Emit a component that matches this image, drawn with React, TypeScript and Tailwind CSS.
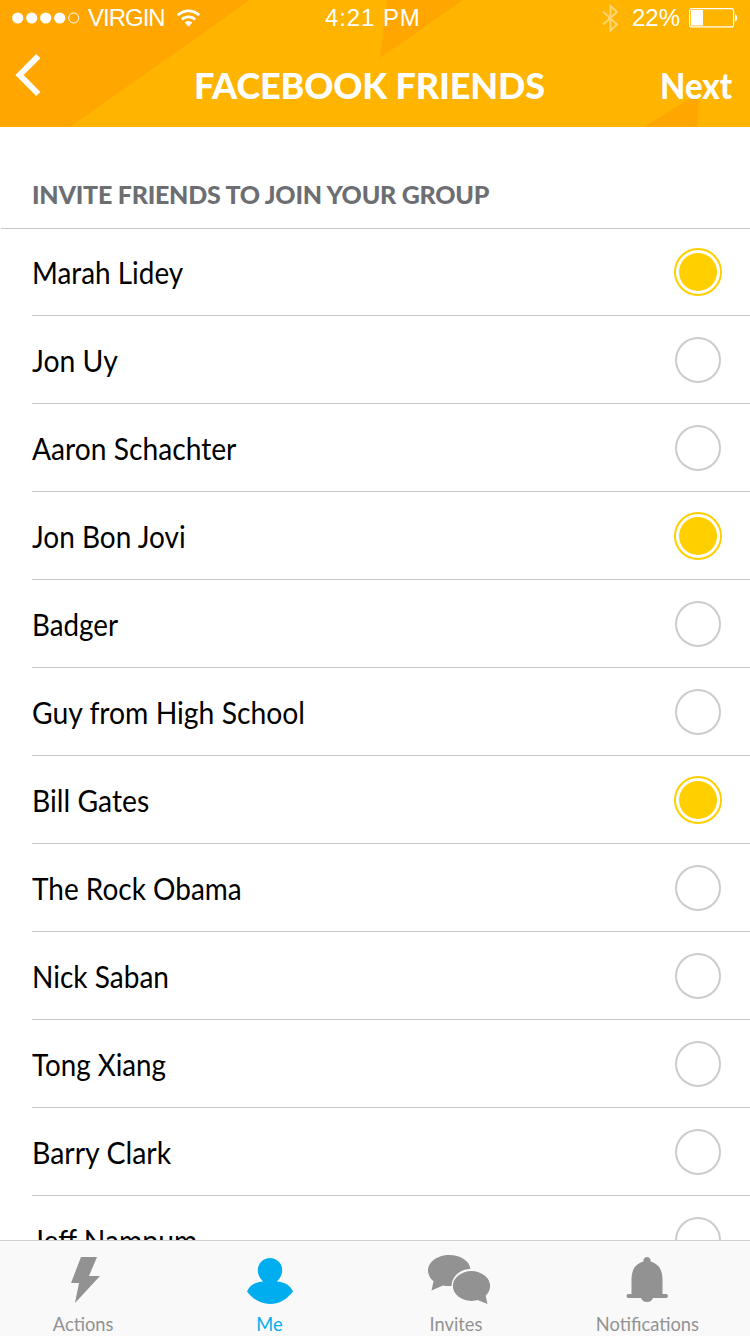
import type { ReactNode } from "react";

type Friend = { name: string; selected?: boolean; fit: string };

const friends: Friend[] = [
  { name: "Marah Lidey", selected: true, fit: "scale-x-[0.929]" },
  { name: "Jon Uy", fit: "scale-x-[0.945]" },
  { name: "Aaron Schachter", fit: "scale-x-[0.94]" },
  { name: "Jon Bon Jovi", selected: true, fit: "scale-x-[0.933]" },
  { name: "Badger", fit: "scale-x-[0.925]" },
  { name: "Guy from High School", fit: "scale-x-[0.944]" },
  { name: "Bill Gates", selected: true, fit: "scale-x-[0.944]" },
  { name: "The Rock Obama", fit: "scale-x-[0.933]" },
  { name: "Nick Saban", fit: "scale-x-[0.935]" },
  { name: "Tong Xiang", fit: "scale-x-[0.924]" },
  { name: "Barry Clark", fit: "scale-x-[0.95]" },
  { name: "Jeff Nampum", fit: "scale-x-[0.943]" },
];

function StatusBar() {
  return (
    <div className="relative flex h-9 items-center justify-between pl-3 pr-3 font-['Liberation_Sans',sans-serif] text-[24px] leading-9">
      <div className="flex items-center">
        <svg width="68" height="12" viewBox="0 0 68 12" fill="#fff">
          <circle cx="5.7" cy="6" r="5.6" />
          <circle cx="19.7" cy="6" r="5.6" />
          <circle cx="33.7" cy="6" r="5.6" />
          <circle cx="47.7" cy="6" r="5.6" />
          <circle cx="61.7" cy="6" r="5" fill="none" stroke="#fff" strokeWidth="1" />
        </svg>
        <span className="ml-2 w-[78px] tracking-[-1px]">VIRGIN</span>
        <svg className="ml-[10px]" width="25" height="20" viewBox="0 0 25 20" fill="none" stroke="#fff" strokeWidth="2.8">
          <path d="M1.8 7.3a15.2 15.2 0 0 1 21.4 0" />
          <path d="M5.8 11.6a9.6 9.6 0 0 1 13.4 0" />
          <path d="M8.6 14.6a5.6 5.6 0 0 1 7.8 0L12.5 18.8z" fill="#fff" stroke="none" />
        </svg>
      </div>
      <span className="absolute left-[325px] tracking-[0.9px]">4:21 PM</span>
      <div className="flex items-center">
        <svg width="17" height="28" viewBox="0 0 17 28" fill="none" stroke="#fff" strokeOpacity="0.45" strokeWidth="2">
          <path d="M1 7.5 15 20.5 8.5 26.5V2l6.5 6L1 20.5" />
        </svg>
        <span className="ml-[13px] w-[49px]">22%</span>
        <svg className="ml-[8px]" width="49" height="20" viewBox="0 0 49 20">
          <rect x="0.6" y="0.6" width="44" height="18.3" rx="2.2" fill="none" stroke="#fff" strokeWidth="1.2" />
          <rect x="2" y="2" width="12" height="15.5" fill="#fff" />
          <path d="M46 6.2c3 .8 3 6.6 0 7.4z" fill="#fff" />
        </svg>
      </div>
    </div>
  );
}

function Header() {
  return (
    <header className="relative h-[127px] shrink-0 overflow-hidden bg-[#ffb400] text-white">
      <svg className="absolute inset-0" width="750" height="127" viewBox="0 0 750 127" fill="#ffa600">
        <path d="M0 0h250L70 127H0z" />
        <path d="M387 0h76L380 58z" />
        <path d="M644 127 699 93l-2 34z" />
      </svg>
      <StatusBar />
      <div className="relative flex h-[91px] justify-between pl-[15px] pr-[18px]">
        <svg className="mt-[17px]" width="27" height="44" viewBox="0 0 27 44" fill="none" stroke="#fff" strokeWidth="6">
          <path d="M23.3 3.2 4.6 22l18.7 19" />
        </svg>
        <h1 className="absolute left-[194px] top-[25px] whitespace-nowrap text-[36px] font-black leading-[48px] tracking-[-0.15px]">
          FACEBOOK FRIENDS
        </h1>
        <button className="mt-[25px] h-12 origin-right scale-x-[0.91] whitespace-nowrap text-[36px] font-black leading-[48px]">
          Next
        </button>
      </div>
    </header>
  );
}

function Radio({ selected }: { selected?: boolean }) {
  return selected ? (
    <span className="flex size-12 items-center justify-center rounded-full border-2 border-[#ffcf00]">
      <span className="size-[38px] rounded-full bg-[#ffcf00]" />
    </span>
  ) : (
    <span className="mr-px size-[46px] rounded-full border-2 border-[#cccccc]" />
  );
}

function Tab({ label, active, width, children }: { label: string; active?: boolean; width: string; children: ReactNode }) {
  return (
    <button className={`flex flex-col items-center ${width} ${active ? "text-[#00aeef]" : "text-[#929292]"}`}>
      <svg className="mt-[11px]" width="80" height="56" viewBox="0 0 80 56" fill="currentColor">
        {children}
      </svg>
      <span className="mt-[3px] scale-x-[0.915] text-[20px] leading-6">{label}</span>
    </button>
  );
}

export default function App() {
  return (
    <div className="flex h-[1336px] w-[750px] flex-col overflow-hidden bg-white font-[Lato,sans-serif] text-black">
      <Header />
      <main className="min-h-0 flex-1 overflow-hidden">
        <div className="ml-px h-[102px] border-b border-[#c8c7cc] pl-[31px] pt-[51px]">
          <h2 className="whitespace-nowrap text-[25px] font-black leading-8 tracking-[-0.24px] text-[#6d6e72]">
            INVITE FRIENDS TO JOIN YOUR GROUP
          </h2>
        </div>
        <ul className="-mt-px">
          {friends.map((f) => (
            <li key={f.name} className="ml-8 flex h-[88px] items-center justify-between border-b border-[#c8c7cc] pr-7 pt-px">
              <span className={`origin-left whitespace-nowrap text-[30px] leading-9 ${f.fit}`}>{f.name}</span>
              <Radio selected={f.selected} />
            </li>
          ))}
        </ul>
      </main>
      <nav className="flex h-24 shrink-0 border-t border-[#d0d0d0] bg-[#f9f9f9]">
        <Tab label="Actions" width="w-[166px]">
          <path d="M38 5h16l-8 19h11L32 51l4-20h-8z" />
        </Tab>
        <Tab label="Me" active width="w-[206px]">
          <path d="M41 6a12.2 12.2 0 0 1 12.2 12.2c0 5-2.7 8.7-5.4 11.2C56 30 61 33 64 39.5 58 47.500 50 52 41 52s-17-4.500-23-12.500C21 33 26 30 34.200 29.400c-2.700-2.500-5.400-6.200-5.400-11.200A12.200 12.200 0 0 1 41 6z" />
        </Tab>
        <Tab label="Invites" width="w-[168px]">
          <path d="M33 3c11.500 0 20.500 6 21.500 13.700C44 17.500 36 24 35.500 34c-3 .3-6 0-8.500-.5L15.500 38.500l2-9.300C14 26.500 12 22.500 12 18.500 12 10 21.500 3 33 3z" />
          <ellipse cx="55.5" cy="34" rx="18.600" ry="15" />
          <path d="m61.500 48 10 4-2-9z" />
        </Tab>
        <Tab label="Notifications" width="w-[210px] pl-1">
          <path d="M40 5c2.200 0 3.700 1.600 3.700 4.500C52 12 55.500 18 55.500 28v14H59a2 2 0 0 1 0 4H46c-1 2.500-3 4-6 4s-5-1.500-6-4H21.500a2 2 0 0 1 0-4h3V28c0-10 3.500-16 11.800-18.500C36.300 6.600 37.800 5 40 5z" />
        </Tab>
      </nav>
    </div>
  );
}
